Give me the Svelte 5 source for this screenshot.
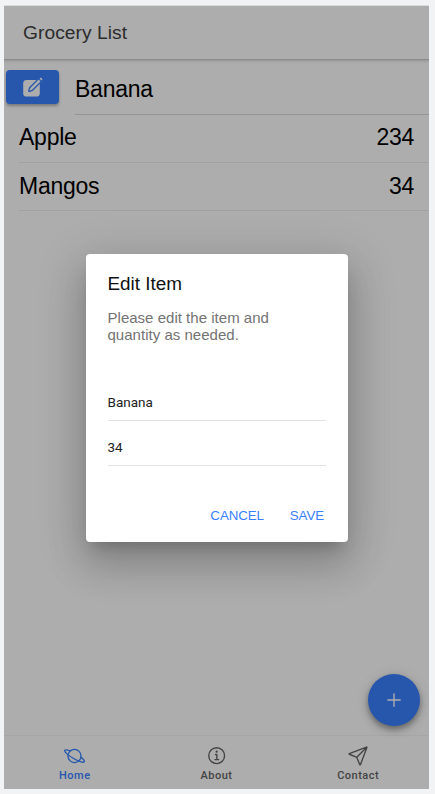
<script>
  const items = [
    { name: 'Apple', qty: 234 },
    { name: 'Mangos', qty: 34 }
  ];
</script>

<div class="page">
  <div class="app">
    <header><h1>Grocery List</h1></header>
    <main>
      <div class="sliding">
        <button class="edit" aria-label="Edit">
          <svg viewBox="0 0 23 23">
            <rect x="2.2" y="4" width="16.6" height="16.6" rx="3.4" fill="#fff" />
            <path d="M8.4 14.8l.9-2.8 8.4-8.4 1.8 1.8-8.4 8.4z" fill="#fff" stroke="#3880ff" stroke-width="2.6" stroke-linejoin="round" />
            <path d="M8.4 14.8l.9-2.8 8.4-8.4 1.8 1.8-8.4 8.4z" fill="#fff" />
            <path d="M18.6 2.7l1.2-1.1 1.7 1.7-1.1 1.2z" fill="#fff" />
          </svg>
        </button>
        <div class="slid"><span>Banana</span></div>
      </div>
      {#each items as item}
        <div class="item"><span class="name">{item.name}</span><span class="qty">{item.qty}</span></div>
      {/each}
    </main>
    <nav>
      <div class="tab active">
        <svg viewBox="0 0 512 512" class="line">
          <path d="M413.48 284.46c58.87 47.24 91.61 89 80.31 108.55-17.85 30.85-138.78-5.48-270.1-81.15S.37 149.84 18.21 119c11.16-19.28 62.58-12.32 131.64 14.09" />
          <circle cx="256" cy="256" r="160" />
        </svg>
        <span>Home</span>
      </div>
      <div class="tab">
        <svg viewBox="0 0 512 512" class="line">
          <path d="M248 64C146.39 64 64 146.39 64 248s82.39 184 184 184 184-82.39 184-184S349.61 64 248 64z" />
          <path d="M220 220h32v116M208 340h88" />
          <circle cx="248" cy="156" r="26" class="dot" />
        </svg>
        <span>About</span>
      </div>
      <div class="tab">
        <svg viewBox="0 0 512 512" class="line">
          <path d="M53.12 199.94l400-151.39a8 8 0 0110.33 10.33l-151.39 400a8 8 0 01-15-.34l-67.4-166.09a16 16 0 00-10.11-10.11L53.46 215a8 8 0 01-.34-15.06zM460 52L227 285" />
        </svg>
        <span>Contact</span>
      </div>
    </nav>
    <button class="fab" aria-label="Add">
      <svg viewBox="0 0 512 512" class="line"><path d="M256 112v288M400 256H112" /></svg>
    </button>
    <div class="backdrop">
      <div class="alert" role="dialog" aria-label="Edit Item">
        <h2>Edit Item</h2>
        <p>Please edit the item and quantity as needed.</p>
        <div class="inputs">
          <div class="field">Banana</div>
          <div class="field">34</div>
        </div>
        <div class="actions">
          <button>CANCEL</button>
          <button>SAVE</button>
        </div>
      </div>
    </div>
  </div>
</div>

<style>
  :global(body) { background: #f1f3f4; }
  .page {
    box-sizing: border-box;
    height: 794px;
    padding: 6px 6px 5px 4px;
    font-family: "Liberation Sans", Arial, sans-serif;
  }
  .app {
    position: relative;
    display: flex;
    flex-direction: column;
    height: 783px;
    overflow: hidden;
    background: #fff;
    box-shadow: 0 -1px 0 #d9dddb;
  }
  button { border: 0; padding: 0; font: inherit; }
  header {
    flex: none;
    display: flex;
    align-items: center;
    height: 53px;
    padding-left: 19px;
    box-shadow: 0 1px 1px #ccc, 0 2px 3px #ddd;
  }
  h1 { margin: 0; font-size: 19.2px; font-weight: 400; color: #424242; line-height: 24px; letter-spacing: .05px; }
  main { flex: 1; padding-top: 3px; font-size: 23px; line-height: 26px; color: #000; }
  .sliding { box-sizing: border-box; display: flex; height: 53px; }
  .edit {
    box-sizing: border-box;
    display: flex;
    align-items: center;
    justify-content: center;
    width: 53px;
    height: 34px;
    margin: 8px 16px 0 2px;
    border-radius: 4px;
    background: #3880ff;
    box-shadow: 0 2px 3px rgba(0, 0, 0, .3);
  }
  .edit svg { width: 23px; height: 23px; }
  .slid {
    box-sizing: border-box;
    flex: 1;
    display: flex;
    align-items: center;
    padding-top: 1px;
    border-bottom: 1px solid #dcdcdc;
    letter-spacing: -.25px;
  }
  .item {
    box-sizing: border-box;
    display: flex;
    align-items: flex-start;
    justify-content: space-between;
    height: 48px;
    margin-left: 15px;
    padding: 9px 15px 0 0;
    border-bottom: 1px solid #eee;
  }
  .item + .item { padding-top: 10px; }
  .name { letter-spacing: -.25px; }
  .qty { letter-spacing: -.3px; }
  nav { flex: none; display: flex; height: 53px; box-shadow: 0 -1px 0 #f6f6f6; }
  .tab {
    flex: 1;
    display: flex;
    flex-direction: column;
    align-items: center;
    padding-top: 9px;
    color: #656565;
    font: 500 11px/13px Roboto, sans-serif;
    letter-spacing: .5px;
  }
  .tab svg { width: 22px; height: 22px; margin-bottom: 2px; }
  .tab.active svg { width: 21px; }
  .tab.active { color: #3880ff; }
  .line { fill: none; stroke: currentColor; stroke-width: 32px; stroke-linecap: round; stroke-linejoin: round; }
  .dot { fill: currentColor; stroke: none; }
  .fab {
    position: absolute;
    right: 9px;
    bottom: 63px;
    display: flex;
    align-items: center;
    justify-content: center;
    width: 52px;
    height: 52px;
    border-radius: 50%;
    background: #3880ff;
    color: #fff;
    box-shadow: 0 3px 5px rgba(0, 0, 0, .25), 0 5px 10px rgba(0, 0, 0, .16), 0 1px 14px rgba(0, 0, 0, .1);
  }
  .fab svg { width: 22px; height: 22px; }
  .backdrop {
    position: absolute;
    inset: 0;
    display: flex;
    align-items: center;
    justify-content: center;
    background: rgba(0, 0, 0, .32);
  }
  .alert {
    box-sizing: border-box;
    width: 262px;
    height: 288px;
    padding: 19px 22px 0;
    border-radius: 4px;
    background: #fff;
    box-shadow: 0 11px 15px -7px rgba(0, 0, 0, .2), 0 24px 38px 3px rgba(0, 0, 0, .14), 0 9px 46px 8px rgba(0, 0, 0, .12);
  }
  h2 { margin: 0; font-size: 18.9px; font-weight: 400; line-height: 22px; color: #111; }
  p { margin: 14px 30px 0 0; font-size: 15px; line-height: 17px; color: #737373; letter-spacing: .02px; }
  .inputs { padding-top: 43px; font: 13.5px/16px Roboto, sans-serif; color: #222; }
  .field { box-sizing: border-box; height: 45px; padding-top: 18px; border-bottom: 1px solid #e2e2e2; }
  .field:first-child { height: 35px; padding-top: 8px; }
  .actions { display: flex; justify-content: flex-end; gap: 26px; padding: 42px 1.5px 0 0; }
  .actions button { background: none; color: #3880ff; font-size: 13.3px; line-height: 16px; letter-spacing: -.08px; }
</style>
